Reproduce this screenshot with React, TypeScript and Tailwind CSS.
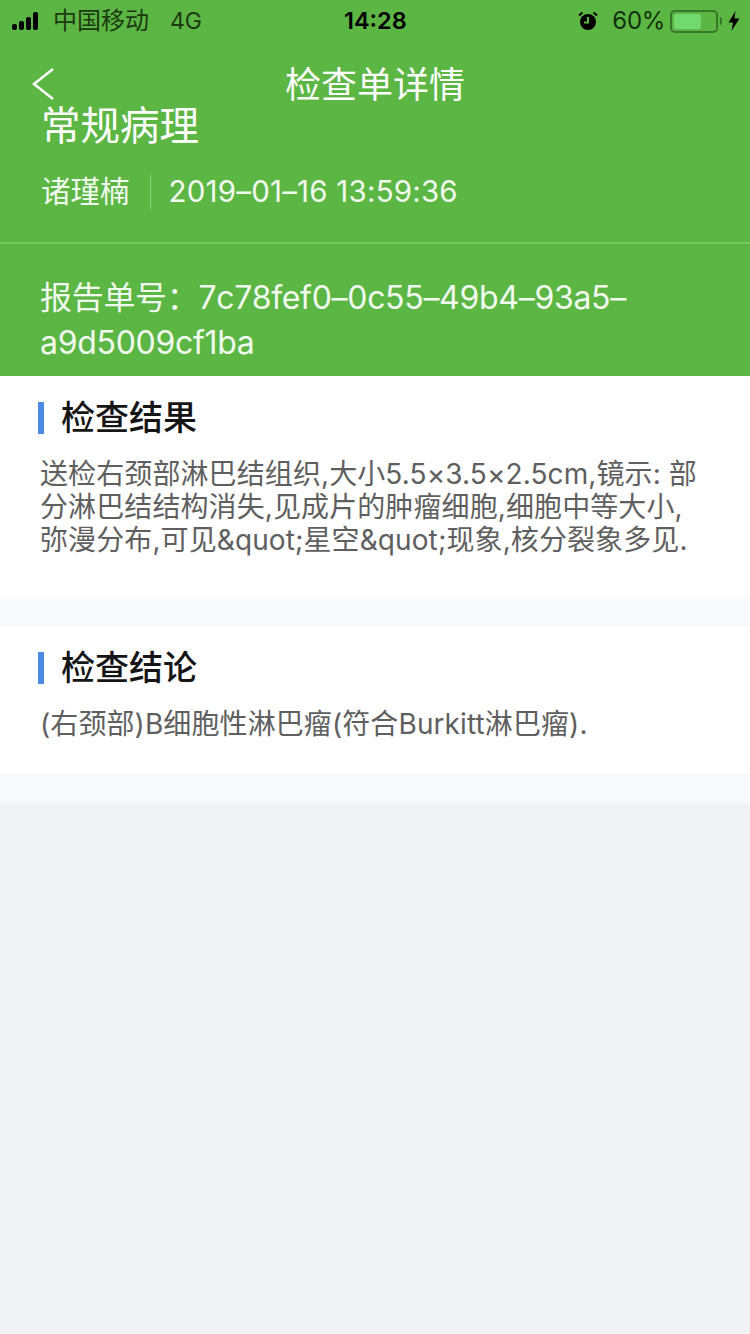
const font = 'font-["Inter","Noto_Sans_CJK_SC",sans-serif]';

function StatusBar() {
  return (
    <div className="relative h-[42px] flex items-center justify-between pl-3 pr-[10px] text-black">
      <div className="flex items-center">
        <div className="flex items-center gap-[2px] h-[18px] w-[34px]">
          <span className="w-[5px] h-[6px] mt-auto rounded-[2px] bg-black" />
          <span className="w-[5px] h-[9px] mt-auto rounded-[2px] bg-black" />
          <span className="w-[5px] h-[13px] mt-auto rounded-[2px] bg-black" />
          <span className="w-[5px] h-[18px] mt-auto rounded-[2px] bg-black" />
        </div>
        <span className="ml-[7px] text-[24px] leading-none text-[#1c3a12]">中国移动</span>
        <span className="ml-[21px] text-[23px] leading-none text-[#1c3a12]">4G</span>
      </div>
      <span className="absolute left-[344px] text-[23.5px] leading-none font-semibold">14:28</span>
      <div className="flex items-center">
        <svg width="20" height="20" viewBox="0 0 20 20">
          <circle cx="10" cy="11" r="8" fill="#000" />
          <path d="M10 6v5.5H6" stroke="#5cb644" strokeWidth="2" fill="none" />
          <path d="M1 4.5 4.5 1.5M19 4.5 15.5 1.5" stroke="#000" strokeWidth="2" />
        </svg>
        <span className="ml-[14px] text-[24px] leading-none tracking-[-0.3px] text-[#12300a]">60%</span>
        <div className="ml-[5px] w-[48px] h-[23px] rounded-[5px] border-2 border-[#38762a] p-[2px]">
          <div className="w-[68%] h-full rounded-[2px] bg-[#72d970]" />
        </div>
        <span className="ml-[2px] w-[2px] h-[8px] rounded-r-[2px] bg-[#38762a]" />
        <svg className="ml-[6px]" width="12" height="20" viewBox="0 0 12 20">
          <path d="M7.5 0 0.5 11.5H5L3.5 20 11.5 7.5H6.5Z" fill="#000" />
        </svg>
      </div>
    </div>
  );
}

function Section({ title, children, className }: { title: string; children: React.ReactNode; className: string }) {
  return (
    <section className={`bg-white ${className}`}>
      <div className="flex items-center ml-[38px] h-8">
        <span className="w-[6px] h-8 bg-[#4a8ae2]" />
        <h2 className="ml-[17px] text-[34px] leading-none font-medium text-[#151515]">{title}</h2>
      </div>
      <div className="ml-10 mr-[50px] text-[28px] leading-[33px] tracking-[0.1px] text-[#5f5f5f]">{children}</div>
    </section>
  );
}

export default function App() {
  return (
    <div className={`relative w-[750px] h-[1334px] overflow-hidden bg-[#f1f2f4] ${font}`}>
      <header className="h-[376px] bg-[#5cb644] text-white">
        <StatusBar />
        <div className="relative h-[62px] pt-6 flex items-center justify-center">
          <svg className="absolute left-[30px] top-[24px]" width="26" height="36" viewBox="0 0 26 36" fill="none">
            <path d="M23 3 4 18l19 15" stroke="#fff" strokeWidth="2.5" />
          </svg>
          <h1 className="text-[36px] font-normal leading-none">检查单详情</h1>
        </div>
        <div className="pl-[41px] text-[39.5px] leading-[44px]">常规病理</div>
        <div className="mt-[27px] pl-[41px] flex items-center h-[34px] text-[29.5px] leading-none text-[#f1faee]">
          <span>诸瑾楠</span>
          <span className="ml-5 mr-[18px] w-px h-[34px] bg-[#8fd07e]" />
          <span className="tracking-[0.2px]">2019–01–16 13:59:36</span>
        </div>
        <div className="mt-[33px] h-[2px] bg-[#76c662]" />
        <p className="pt-[31px] pl-10 pr-[70px] text-[32px] leading-[45px] tracking-[-0.3px] text-[#f1faee] break-words">
          报告单号：7c78fef0–0c55–49b4–93a5–a9d5009cf1ba
        </p>
      </header>

      <Section title="检查结果" className="h-[221px] pt-[26px]">
        <p className="mt-[24px]">
          送检右颈部淋巴结组织,大小5.5×3.5×2.5cm,镜示: 部分淋巴结结构消失,见成片的肿瘤细胞,细胞中等大小,弥漫分布,可见&amp;quot;星空&amp;quot;现象,核分裂象多见.
        </p>
      </Section>
      <div className="h-[29px] bg-[#f8f9fb]" />
      <Section title="检查结论" className="h-[148px] pt-[26px]">
        <p className="mt-[24px]">(右颈部)B细胞性淋巴瘤(符合Burkitt淋巴瘤).</p>
      </Section>
      <div className="h-[30px] bg-[#f8f9fb]" />
    </div>
  );
}
